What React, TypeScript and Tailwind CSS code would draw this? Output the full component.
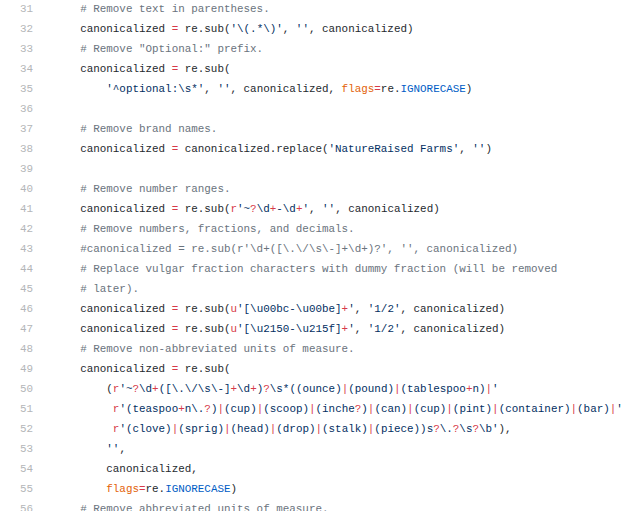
import React from "react";

type Seg = [string, string];

const K = "text-[#d73a49]";
const S = "text-[#032f62]";
const C = "text-[#6a737d]";
const V = "text-[#e36209]";
const C1 = "text-[#005cc5]";
const D = "text-[#24292e]";

// raw regex string: quantifiers and alternation in red, rest navy
const rx = (body: string): Seg[] => {
  const out: Seg[] = [];
  let buf = "";
  for (const ch of body) {
    if (ch === "?" || ch === "+" || ch === "|") {
      if (buf) out.push([buf, S]);
      buf = "";
      out.push([ch, K]);
    } else {
      buf += ch;
    }
  }
  if (buf) out.push([buf, S]);
  return out;
};

const lines: Seg[][] = [
  [["    # Remove text in parentheses.", C]],
  [
    ["    canonicalized ", D],
    ["=", K],
    [" re.sub(", D],
    ["'\\(.*\\)'", S],
    [", ", D],
    ["''", S],
    [", canonicalized)", D],
  ],
  [["    # Remove \"Optional:\" prefix.", C]],
  [["    canonicalized ", D], ["=", K], [" re.sub(", D]],
  [
    ["        ", D],
    ["'^optional:\\s*'", S],
    [", ", D],
    ["''", S],
    [", canonicalized, ", D],
    ["flags", V],
    ["=", K],
    ["re.", D],
    ["IGNORECASE", C1],
    [")", D],
  ],
  [["", D]],
  [["    # Remove brand names.", C]],
  [
    ["    canonicalized ", D],
    ["=", K],
    [" canonicalized.replace(", D],
    ["'NatureRaised Farms'", S],
    [", ", D],
    ["''", S],
    [")", D],
  ],
  [["", D]],
  [["    # Remove number ranges.", C]],
  [
    ["    canonicalized ", D],
    ["=", K],
    [" re.sub(", D],
    ["r", K],
    ...rx("'~?\\d+-\\d+'"),
    [", ", D],
    ["''", S],
    [", canonicalized)", D],
  ],
  [["    # Remove numbers, fractions, and decimals.", C]],
  [["    #canonicalized = re.sub(r'\\d+([\\.\\/\\s\\-]+\\d+)?', '', canonicalized)", C]],
  [["    # Replace vulgar fraction characters with dummy fraction (will be removed", C]],
  [["    # later).", C]],
  [
    ["    canonicalized ", D],
    ["=", K],
    [" re.sub(", D],
    ["u", K],
    ...rx("'[\\u00bc-\\u00be]+'"),
    [", ", D],
    ["'1/2'", S],
    [", canonicalized)", D],
  ],
  [
    ["    canonicalized ", D],
    ["=", K],
    [" re.sub(", D],
    ["u", K],
    ...rx("'[\\u2150-\\u215f]+'"),
    [", ", D],
    ["'1/2'", S],
    [", canonicalized)", D],
  ],
  [["    # Remove non-abbreviated units of measure.", C]],
  [["    canonicalized ", D], ["=", K], [" re.sub(", D]],
  [
    ["        (", D],
    ["r", K],
    ...rx("'~?\\d+([\\.\\/\\s\\-]+\\d+)?\\s*((ounce)|(pound)|(tablespoo+n)|'"),
  ],
  [
    ["         ", D],
    ["r", K],
    ...rx("'(teaspoo+n\\.?)|(cup)|(scoop)|(inche?)|(can)|(cup)|(pint)|(container)|(bar)|'"),
  ],
  [
    ["         ", D],
    ["r", K],
    ...rx("'(clove)|(sprig)|(head)|(drop)|(stalk)|(piece))s?\\.?\\s?\\b'"),
    ["),", D],
  ],
  [["        ", D], ["''", S], [",", D]],
  [["        canonicalized,", D]],
  [["        ", D], ["flags", V], ["=", K], ["re.", D], ["IGNORECASE", C1], [")", D]],
  [["    # Remove abbreviated units of measure.", C]],
];

export default function App() {
  return (
    <div className="w-[631px] h-[511px] overflow-hidden bg-white">
      <div className="-mt-px w-[626px] overflow-hidden font-['Liberation_Mono',monospace] text-[10.9px]">
        {lines.map((segs, i) => (
          <div key={i} className="flex h-[20px] leading-[20px]">
            <div className="w-[33px] shrink-0 text-right text-[#b4b6b8]">{31 + i}</div>
            <div className="pl-[21px] whitespace-pre">
              {segs.map(([t, cls], j) => (
                <span key={j} className={cls}>
                  {t}
                </span>
              ))}
            </div>
          </div>
        ))}
      </div>
    </div>
  );
}
